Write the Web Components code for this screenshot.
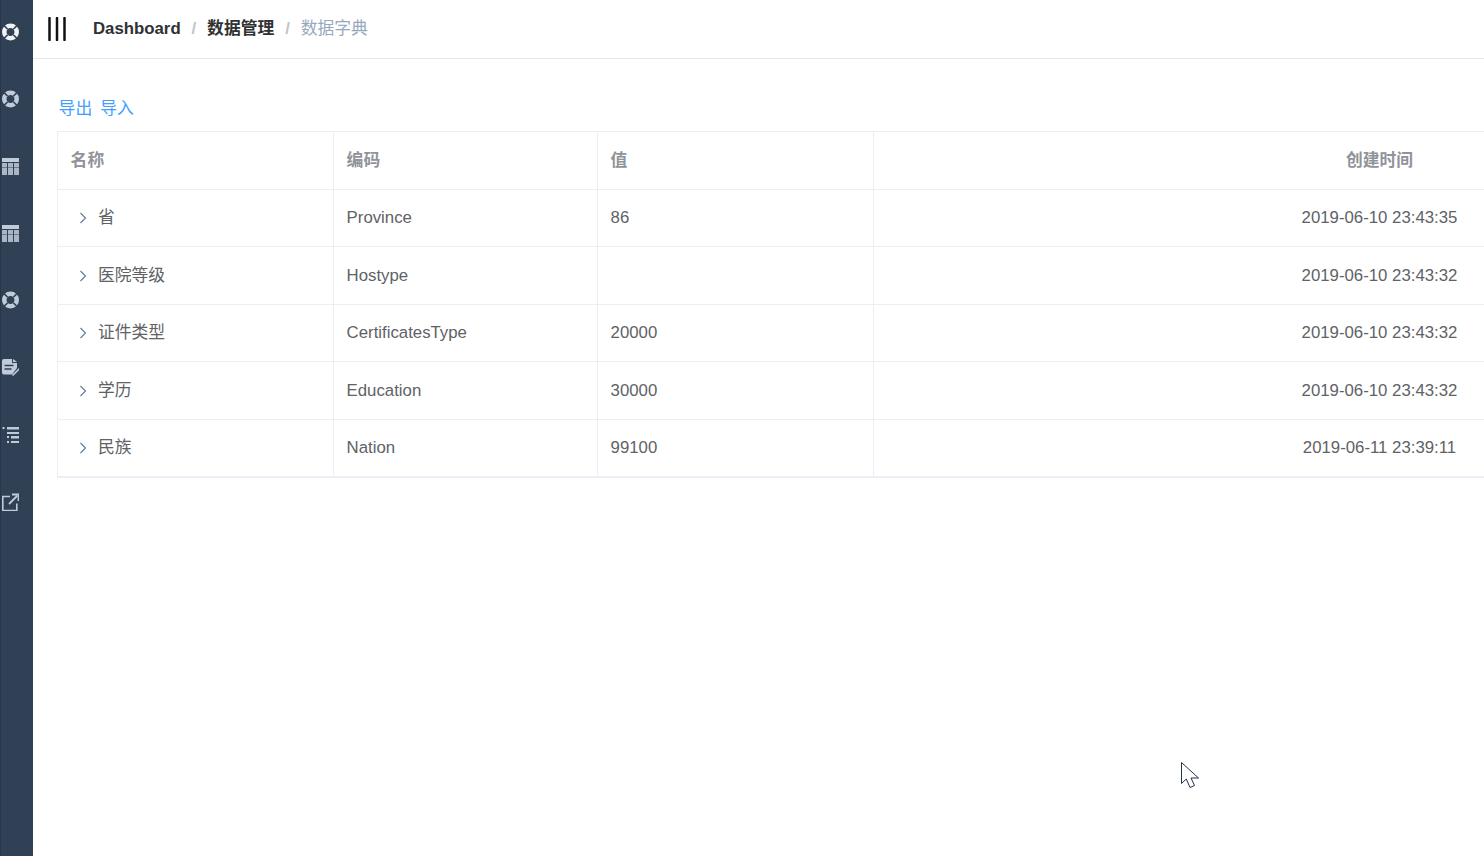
<!DOCTYPE html>
<html lang="zh">
<head>
<meta charset="utf-8">
<title>数据字典</title>
<style>
	html, body { margin: 0; height: 100%; overflow: hidden; background: #fff; }
	body { font: 16.8px "Liberation Sans", "Noto Sans CJK SC", sans-serif; }
</style>
</head>
<body>
<app-shell>
	<side-bar slot="side"></side-bar>
	<top-bar slot="main"></top-bar>
	<dict-page slot="main"></dict-page>
</app-shell>

<script>
const ICONS = {
	buoy: `<g transform="translate(.5 0)"><path fill="currentColor" fill-rule="evenodd" d="M9 .5a8.500 8.500 0 1 0 0 17 8.500 8.500 0 0 0 0-17zM9 5c2.200 0 4 1.800 4 4s-1.800 4-4 4-4-1.800-4-4 1.800-4 4-4z"/>
		<path d="M6.200 6.200L2.600 2.600M11.800 6.200l3.600-3.600M6.200 11.800l-3.600 3.600M11.800 11.800l3.600 3.600" stroke="#304156" stroke-width="1.500"/></g>`,
	table: `<path fill="currentColor" d="M1 1h17v4H1z"/><path fill="currentColor" opacity=".85" d="M1 6h5v12H1zM7 6h5v12H7zM13 6h5v12h-5z"/>
		<path d="M1 10.500h17" stroke="#304156" stroke-width="1" opacity=".5"/>`,
	doc: `<path fill="currentColor" d="M3 1h8v4h5v5l-5 6.500H3a2 2 0 0 1-2-2V3a2 2 0 0 1 2-2z"/>
		<path fill="currentColor" d="M12 1l4 3h-4z"/>
		<path d="M3.500 7.500h9M3.500 11h7" stroke="#304156" stroke-width="1.400"/>
		<path d="M11.500 17.500l7-7" stroke="currentColor" stroke-width="1.600"/>`,
	list: `<path fill="currentColor" d="M1.500 1h2v2h-2zM6 1h13v2.500H6zM6 6h13v2H6zM6 10h2v2H6zM10 10h9v2.500h-9zM6 15h2v2H6zM10 15h9v2h-9z"/>`,
	link: `<path d="M9 3.500H1.800v14h14v-7" fill="none" stroke="currentColor" stroke-width="1.600"/>
		<path d="M8 11l8-8M11 1.500h6.500V8" fill="none" stroke="currentColor" stroke-width="1.800"/>`
}

class AppShell extends HTMLElement {
	constructor() {
		super()
		this.attachShadow({mode:'open'})
		this.shadowRoot.innerHTML = /*html*/`
		<style>
			:host { display: flex; height: 100vh; overflow: hidden; position: relative; }
			.side { flex: 0 0 33px; }
			.main { flex: 1; min-width: 0; overflow: hidden; }
			svg { position: absolute; left: 1181px; top: 762px; }
		</style>
		<div class="side"><slot name="side"></slot></div>
		<div class="main"><slot name="main"></slot></div>
		<svg width="19" height="28" viewBox="0 0 19 28">
			<path d="M.5.500v21l4.800-4.500 3.700 8.500 4.500-2-3.500-7.500h7.500z" fill="#fff" stroke="#22324a" stroke-width="1"/>
		</svg>`
	}
}

class SideBar extends HTMLElement {
	constructor() {
		super()
		this.attachShadow({mode:'open'})
		const items = ['buoy', 'buoy', 'table', 'table', 'buoy', 'doc', 'list', 'link']
		this.shadowRoot.innerHTML = /*html*/`
		<style>
			:host {
				display: flex;
				flex-direction: column;
				height: 100vh;
				box-sizing: border-box;
				padding-top: 23px;
				gap: 49.100px;
				background: #304156;
				border-left: 1px solid #28354a;
				color: #bfcbd9;
			}
			svg { display: block; width: 18px; height: 18px; }
			svg:nth-child(2) { color: #f0f2f5; }
		</style>
		${items.map(name => `<svg viewBox="0 0 18 18">${ICONS[name]}</svg>`).join('')}`
	}
}

class TopBar extends HTMLElement {
	constructor() {
		super()
		this.attachShadow({mode:'open'})
		this.shadowRoot.innerHTML = /*html*/`
		<style>
			:host {
				display: flex;
				align-items: center;
				height: 58px;
				border-bottom: 1px solid #e8e8e8;
				box-sizing: content-box;
				padding-left: 14px;
			}
			svg { display: block; width: 20px; height: 24px; margin-right: 26px; }
			b { font-weight: 700; color: #303133; }
			b.cjk, span { padding-bottom: 4px; }
			i { font-style: normal; font-weight: 700; color: #c0c4cc; margin: 0 10.900px; }
			span { color: #97a8be; }
		</style>
		<svg viewBox="0 0 20 24"><path d="M2.500 1v22M10 1v22M17.500 1v22" stroke="#111" stroke-width="2.500" stroke-linecap="round"/></svg>
		<b>Dashboard</b><i>/</i><b class="cjk">数据管理</b><i>/</i><span>数据字典</span>`
	}
}

class DictRow extends HTMLElement {
	constructor() {
		super()
		this.attachShadow({mode:'open'})
		this.shadowRoot.innerHTML = /*html*/`
		<style>
			:host { display: contents; }
			div {
				display: flex;
				align-items: center;
				box-sizing: border-box;
				padding-left: 12.600px;
				border-right: 1px solid #ebeef5;
				border-bottom: 1px solid #ebeef5;
				color: #606266;
			}
			.name { padding-left: 21px; }
			.name span { padding-bottom: 4px; }
			.last { justify-content: center; padding: 0; border-right: 0; }
			svg { width: 8px; height: 12px; margin-right: 11px; flex: none; }
		</style>
		<div class="name">
			<svg viewBox="0 0 8 12"><path d="M1.500 1l5 5-5 5" fill="none" stroke="#5b7a9a" stroke-width="1.100"/></svg>
			<span>${this.getAttribute('name')}</span>
		</div>
		<div>${this.getAttribute('code')}</div>
		<div>${this.getAttribute('val') || ''}</div>
		<div class="last">${this.getAttribute('time')}</div>`
	}
}

class DictPage extends HTMLElement {
	constructor() {
		super()
		this.attachShadow({mode:'open'})
		this.shadowRoot.innerHTML = /*html*/`
		<style>
			:host { display: block; padding: 39px 0 0 24px; }
			.tools { display: flex; gap: 8px; height: 33px; margin-left: 1.600px; color: #409eff; line-height: 22px; }
			.grid {
				display: grid;
				grid-template-columns: 276px 264px 276px 1011px;
				grid-template-rows: 57.900px repeat(5, 57.500px);
				width: 1827px;
				border-top: 1px solid #ebeef5;
				border-left: 1px solid #ebeef5;
				border-bottom: 1px solid #ebeef5;
				box-sizing: content-box;
			}
			.th {
				display: flex;
				align-items: center;
				padding: 0 0 2px 12.600px;
				font-weight: 700;
				color: #909399;
				border-right: 1px solid #ebeef5;
				border-bottom: 1px solid #ebeef5;
			}
			.th.last { justify-content: center; padding: 0 0 2px; border-right: 0; }
		</style>
		<div class="tools"><span>导出</span><span>导入</span></div>
		<div class="grid">
			<div class="th">名称</div><div class="th">编码</div><div class="th">值</div><div class="th last">创建时间</div>
			<dict-row name="省" code="Province" val="86" time="2019-06-10 23:43:35"></dict-row>
			<dict-row name="医院等级" code="Hostype" time="2019-06-10 23:43:32"></dict-row>
			<dict-row name="证件类型" code="CertificatesType" val="20000" time="2019-06-10 23:43:32"></dict-row>
			<dict-row name="学历" code="Education" val="30000" time="2019-06-10 23:43:32"></dict-row>
			<dict-row name="民族" code="Nation" val="99100" time="2019-06-11 23:39:11"></dict-row>
		</div>`
	}
}

customElements.define('dict-row', DictRow)
customElements.define('dict-page', DictPage)
customElements.define('top-bar', TopBar)
customElements.define('side-bar', SideBar)
customElements.define('app-shell', AppShell)
</script>
</body>
</html>
